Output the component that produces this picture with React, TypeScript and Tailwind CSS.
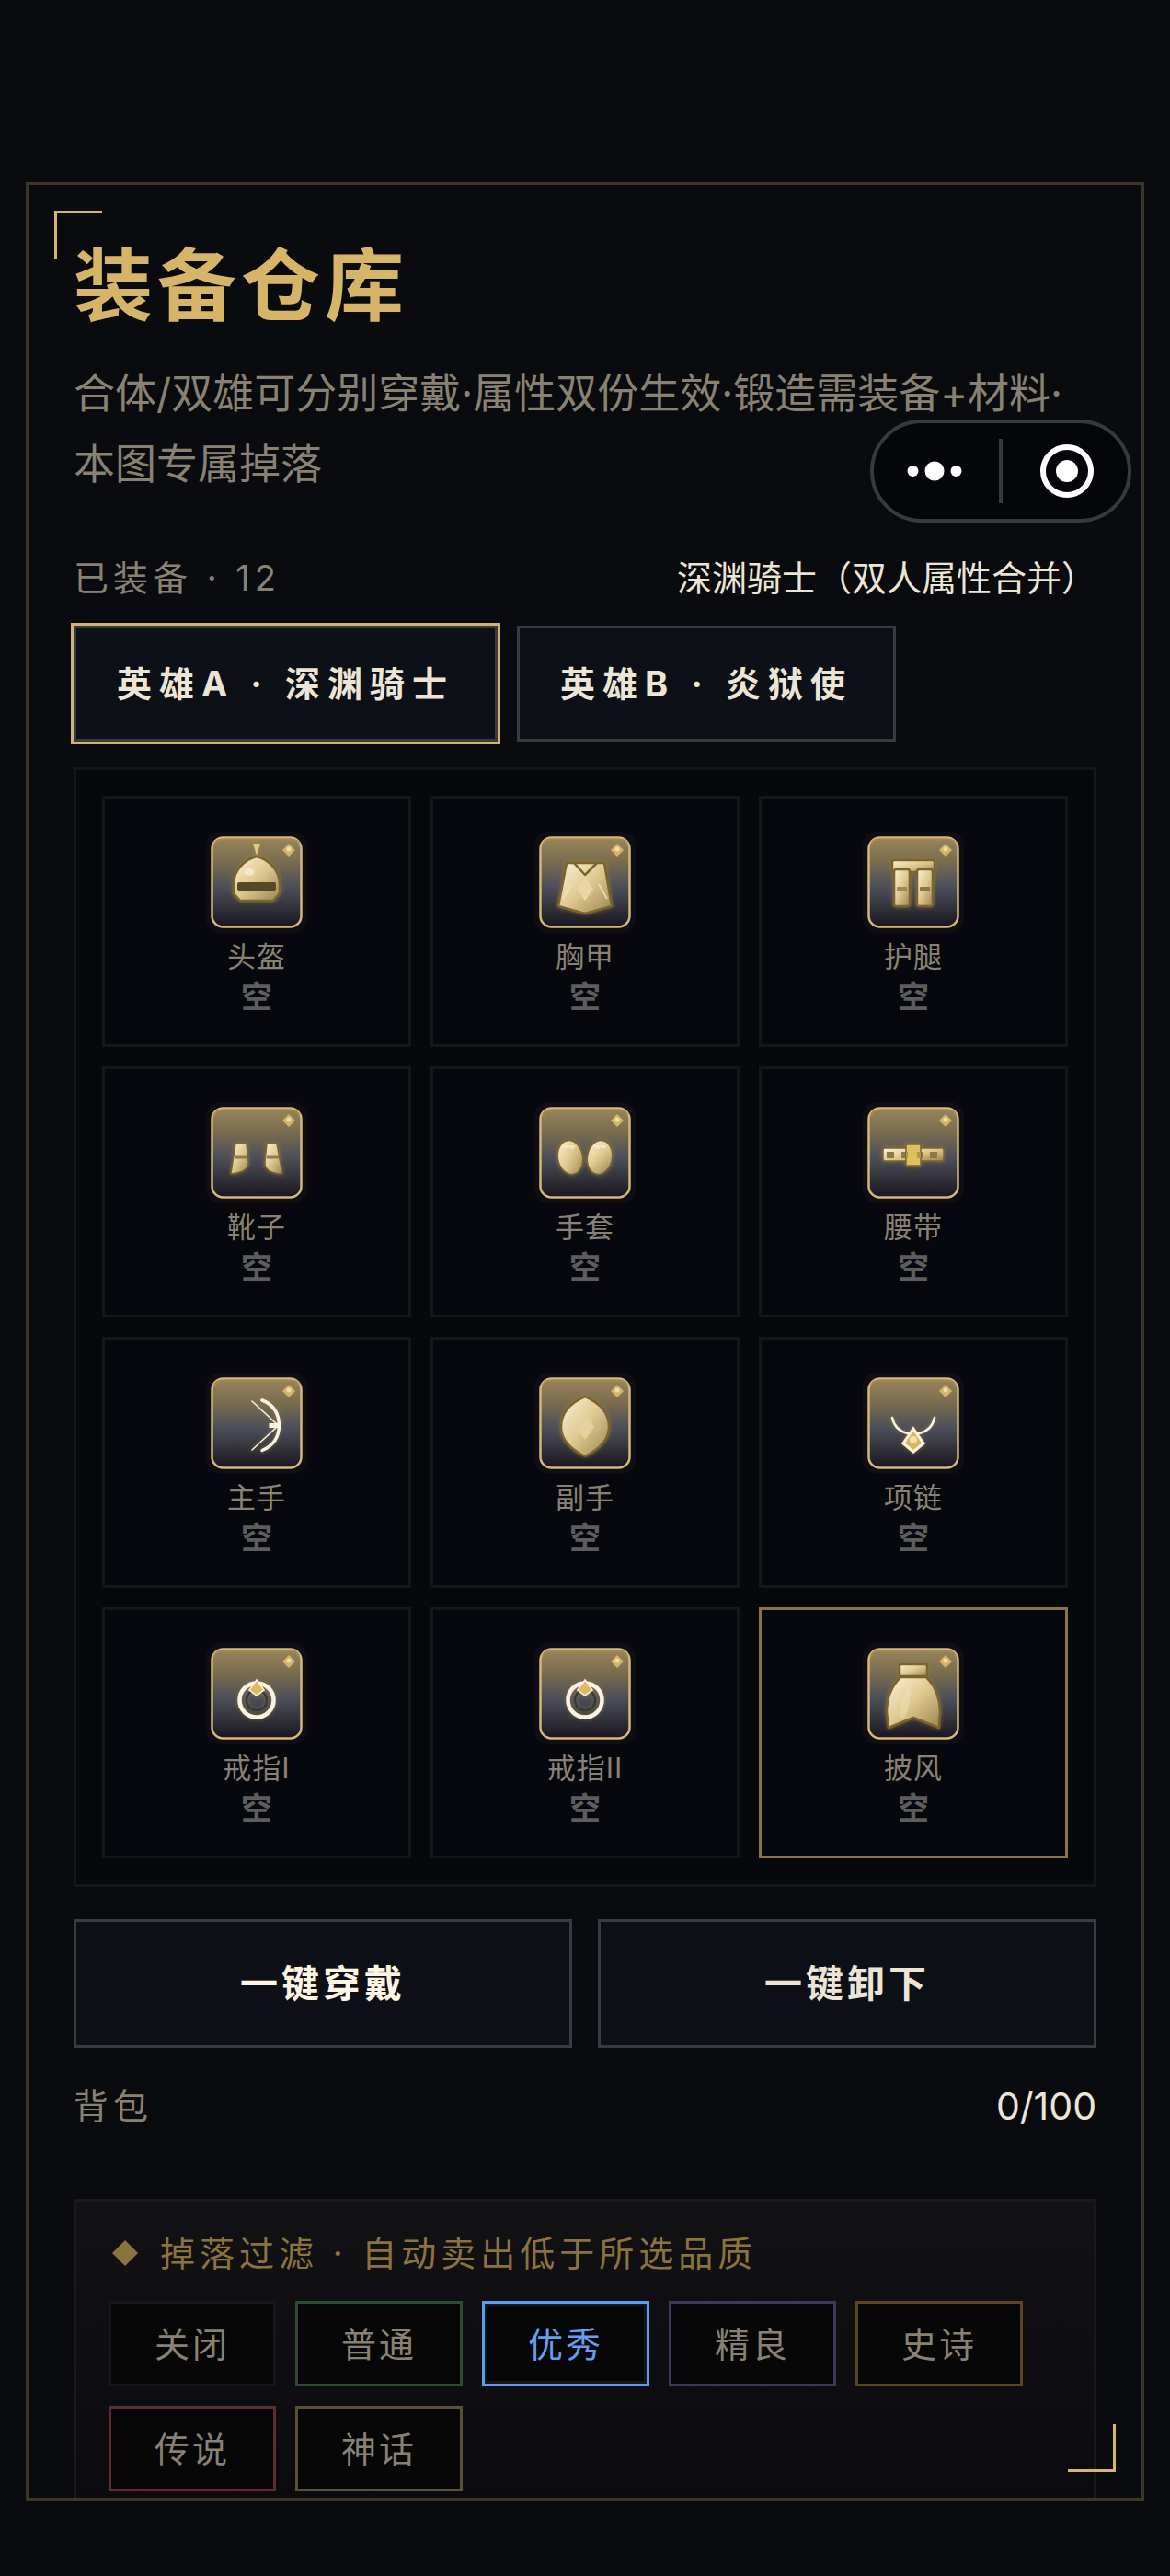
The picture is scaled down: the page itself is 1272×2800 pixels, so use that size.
import { useState, type ReactNode } from 'react';
import clsx from 'clsx';

const OUTLINE = { stroke: '#7a632f', strokeWidth: 2.5, strokeLinejoin: 'round' as const };

const ICONS: Record<string, ReactNode> = {
  helmet: (
    <>
      <path d="M51 13H59L55 26Z" fill="#e3c77d" />
      <path d="M55 27C67 30 80 41 80 57V67L73 75H37L30 67V57C30 41 43 30 55 27Z" fill="url(#gold)" {...OUTLINE} />
      <rect x="34" y="55" width="42" height="9" rx="2" fill="#544829" />
      <ellipse cx="47" cy="44" rx="5.5" ry="4" fill="#f8edd4" opacity=".8" />
    </>
  ),
  chest: (
    <>
      <path d="M35 34H76L84 81L55 89L26 81Z" fill="url(#gold)" {...OUTLINE} />
      <path d="M43 34L55 47L68 34" fill="none" {...OUTLINE} />
      <path d="M55 50L64 62L55 75L46 62Z" fill="#e9d6a4" />
      <path d="M40 57L31 73M70 57L79 73" stroke="#f3e4bd" strokeWidth="2" opacity=".75" />
    </>
  ),
  legs: (
    <>
      <rect x="32" y="31" width="46" height="13" rx="2" fill="url(#gold)" {...OUTLINE} />
      <rect x="34" y="41" width="17" height="40" rx="2.5" fill="url(#gold)" {...OUTLINE} />
      <rect x="59" y="41" width="17" height="40" rx="2.5" fill="url(#gold)" {...OUTLINE} />
      <rect x="37" y="60" width="11" height="5" rx="1" fill="#9d8b60" />
      <rect x="62" y="60" width="11" height="5" rx="1" fill="#8a7747" />
    </>
  ),
  boots: (
    <>
      <path d="M32 45H44L46 65Q47 76 27 78Z" fill="url(#gold)" {...OUTLINE} strokeWidth="1.5" />
      <path d="M66 45H77L83 78Q63 77 64 65Z" fill="url(#gold)" {...OUTLINE} strokeWidth="1.5" />
      <path d="M31 59.5H44.5M66 59.5H79" stroke="#8f7c4e" strokeWidth="4" />
    </>
  ),
  gloves: (
    <>
      <ellipse cx="39" cy="60" rx="13.5" ry="18.5" transform="rotate(-10 39 60)" fill="url(#gold)" {...OUTLINE} strokeWidth="1.5" />
      <ellipse cx="71" cy="60" rx="13.5" ry="18.5" transform="rotate(10 71 60)" fill="url(#gold)" {...OUTLINE} strokeWidth="1.5" />
      <path d="M31 47A3 3 0 0 0 37 48A3 3 0 0 0 44 47M65 47A3 3 0 0 0 72 48A3 3 0 0 0 78 47" fill="#fbf0d5" opacity=".6" />
    </>
  ),
  belt: (
    <>
      <rect x="22" y="50" width="66" height="14" rx="2" fill="url(#gold)" {...OUTLINE} strokeWidth="1.5" />
      <path d="M26 54H34V61H26ZM42 54H49V61H42ZM60 54H66V61H60ZM73 54H81V61H73Z" fill="#8b7949" />
      <rect x="47" y="46" width="16" height="23" rx="1" fill="#dfc061" stroke="#7a632f" strokeWidth="1.5" />
      <path d="M47 54H49V61H47ZM59 54H63V61H59Z" fill="#b1954b" />
    </>
  ),
  bow: (
    <g fill="none" stroke="#fbf3e2" strokeLinecap="round">
      <path d="M61 30Q79 37 79.5 57.5Q79 77 61 84.5" strokeWidth="3.5" />
      <path d="M50 31L77 56M77 59L50 84" strokeWidth="1.5" />
      <rect x="69" y="55.5" width="12" height="4" fill="#fbf3e2" strokeWidth="1" />
    </g>
  ),
  shield: (
    <>
      <path d="M55 26Q81 37 81 59Q81 78 55 91Q29 78 29 59Q29 37 55 26Z" fill="url(#gold)" {...OUTLINE} />
      <path d="M55 45L65 59L55 73L45 59Z" fill="#e4d19f" />
    </>
  ),
  necklace: (
    <>
      <path d="M32 49Q35 63 49 66M78 49Q75 63 61 66" fill="none" stroke="#fbf3e2" strokeWidth="2.5" strokeLinecap="round" />
      <path d="M55 61L66 77L55 86L44 77Z" fill="#d8b65f" stroke="#fbf3e2" strokeWidth="3" />
      <circle cx="55" cy="73" r="4" fill="#f2dfac" />
    </>
  ),
  ring: (
    <>
      <circle cx="55" cy="62" r="18.5" fill="none" stroke="#fbf3e2" strokeWidth="4.5" />
      <circle cx="55" cy="62" r="11" fill="none" stroke="#36373b" strokeWidth="2.5" />
      <path d="M55 40L63 51L55 57L47 51Z" fill="#dcb964" stroke="#fbf3e2" strokeWidth="1.5" />
    </>
  ),
  cape: (
    <>
      <path d="M41 37H69Q84 52 84 75L83 92L55 81L28 92L26 75Q26 52 41 37Z" fill="url(#gold)" {...OUTLINE} />
      <rect x="40" y="23" width="30" height="13" rx="2" fill="url(#gold)" {...OUTLINE} />
      <path d="M51 46Q38 62 42 83Q53 76 51 46Z" fill="#f0e0b5" opacity=".5" />
    </>
  ),
};

const SLOTS = [
  { name: '头盔', icon: 'helmet' },
  { name: '胸甲', icon: 'chest' },
  { name: '护腿', icon: 'legs' },
  { name: '靴子', icon: 'boots' },
  { name: '手套', icon: 'gloves' },
  { name: '腰带', icon: 'belt' },
  { name: '主手', icon: 'bow' },
  { name: '副手', icon: 'shield' },
  { name: '项链', icon: 'necklace' },
  { name: '戒指I', icon: 'ring' },
  { name: '戒指II', icon: 'ring' },
  { name: '披风', icon: 'cape' },
];

const HEROES = ['英雄A · 深渊骑士', '英雄B · 炎狱使'];

const QUALITIES = [
  { name: '关闭', border: 'border-[#17171a]' },
  { name: '普通', border: 'border-[#2d4a33]' },
  { name: '优秀', border: 'border-[#29466e]' },
  { name: '精良', border: 'border-[#42345a]' },
  { name: '史诗', border: 'border-[#5b4326]' },
  { name: '传说', border: 'border-[#5b2d30]' },
  { name: '神话', border: 'border-[#59503a]' },
];

function IconDefs() {
  return (
    <svg className="absolute size-0" aria-hidden="true">
      <defs>
        <linearGradient id="gold" x1="0" y1="0" x2="1" y2="1">
          <stop offset="0" stopColor="#fdf2d8" />
          <stop offset=".5" stopColor="#dfc88f" />
          <stop offset="1" stopColor="#9a8450" />
        </linearGradient>
        <linearGradient id="tile" x1="0" y1="0" x2="0" y2="1">
          <stop offset="0" stopColor="#98855b" />
          <stop offset=".28" stopColor="#786b4e" />
          <stop offset=".57" stopColor="#4a4c59" />
          <stop offset=".75" stopColor="#36373d" />
          <stop offset="1" stopColor="#191521" />
        </linearGradient>
        <filter id="glow" x="-30%" y="-30%" width="160%" height="160%">
          <feDropShadow dx="0" dy="0" stdDeviation="2" floodColor="#a58538" floodOpacity=".6" />
        </filter>
      </defs>
    </svg>
  );
}

function SlotIcon({ icon }: { icon: string }) {
  return (
    <svg viewBox="0 0 110 110" className="size-[110px]" aria-hidden="true">
      <rect width="110" height="110" rx="15" fill="#0f0e15" />
      <rect x="6.5" y="6.5" width="97" height="97" rx="12" fill="url(#tile)" stroke="#d3b878" strokeWidth="2.5" />
      <path d="M9 15Q10 8.500 18 8.500H92Q100 8.500 101 15" fill="none" stroke="#a48a50" strokeWidth="2" />
      <path d="M90 13L97 20L90 27L83 20Z" fill="#d3b469" />
      <circle cx="90" cy="19" r="2.5" fill="#efdca6" />
      <g filter="url(#glow)">{ICONS[icon]}</g>
    </svg>
  );
}

function Capsule() {
  return (
    <div className="absolute top-[456px] right-[42px] flex h-28 w-[284px] items-center rounded-full border-4 border-[#38393d] bg-[#050609]">
      <button aria-label="更多" className="flex flex-1 justify-center pr-1">
        <svg viewBox="0 0 60 24" className="h-6 w-[60px]" fill="#fff">
          <circle cx="6.5" cy="12" r="6" />
          <circle cx="30" cy="12" r="10.5" />
          <circle cx="53.5" cy="12" r="6" />
        </svg>
      </button>
      <span className="h-[70px] w-1 bg-[#38393d]" />
      <button aria-label="关闭" className="flex flex-1 justify-center pl-1">
        <svg viewBox="0 0 58 58" className="size-[58px]">
          <circle cx="29" cy="29" r="26" fill="none" stroke="#fff" strokeWidth="6" />
          <circle cx="29" cy="29" r="12" fill="#fff" />
        </svg>
      </button>
    </div>
  );
}

export default function App() {
  const [hero, setHero] = useState(0);
  const [slot, setSlot] = useState(11);
  const [quality, setQuality] = useState('优秀');

  return (
    <div className="relative flex h-screen flex-col bg-[#0a0b0e] px-7 pt-[198px] pb-[82px] font-[Inter,'Noto_Sans_CJK_SC',sans-serif] text-[38px] leading-[56px] text-[#ece5d6]">
      <IconDefs />
      <main className="relative min-h-0 flex-1 overflow-hidden border-[3px] border-[#3d3526] px-[49px] pt-14">
        <span className="absolute top-7 left-7 size-[52px] border-t-[3px] border-l-[3px] border-[#d6b76a]" />
        <span className="absolute right-7 bottom-7 z-10 size-[52px] border-r-[3px] border-b-[3px] border-[#d6b76a]" />

        <h1 className="text-[86px] leading-[108px] font-bold tracking-[5px] text-[#d6b468]">装备仓库</h1>
        <p className="mt-6 text-[45px] leading-[77px] text-[#898274]">合体/双雄可分别穿戴·属性双份生效·锻造需装备+材料·本图专属掉落</p>

        <div className="mt-[57px] flex justify-between">
          <span className="tracking-[5px] text-[#898274]">已装备 · 12</span>
          <span>深渊骑士（双人属性合并）</span>
        </div>

        <div className="mt-6 flex gap-[21px]">
          {HEROES.map((name, i) => (
            <button
              key={name}
              onClick={() => setHero(i)}
              className={clsx('h-[126px] border-[3px] border-[#393b40] bg-[#0d1017] px-11 font-bold tracking-[8px]', hero === i && 'ring-[3px] ring-[#d0b272]')}
            >
              {name}
            </button>
          ))}
        </div>

        <section className="mt-7 grid grid-cols-3 gap-[21px] border-[3px] border-[#15161a] bg-[#07080c] p-7">
          {SLOTS.map((s, i) => (
            <button
              key={s.name}
              onClick={() => setSlot(i)}
              className={clsx('flex h-[273px] flex-col items-center border-[3px] bg-[#07080d] pt-9', slot === i ? 'border-[#8b7344]' : 'border-[#15161a]')}
            >
              <SlotIcon icon={s.icon} />
              <span className="mt-1 text-[31px] leading-[44px] tracking-[1px] text-[#898274]">{s.name}</span>
              <span className="text-[34px] leading-[44px] font-bold text-[#5e5d5d]">空</span>
            </button>
          ))}
        </section>

        <div className="mt-[35px] grid grid-cols-2 gap-7">
          <button className="h-[140px] border-[3px] border-[#393b40] bg-[#0d1017] text-[41px] font-bold tracking-[4px] text-[#fff5e2]">一键穿戴</button>
          <button className="h-[140px] border-[3px] border-[#393b40] bg-[#0d1017] text-[41px] font-bold tracking-[4px]">一键卸下</button>
        </div>

        <div className="mt-[35px] flex justify-between">
          <span className="tracking-[5px] text-[#898274]">背包</span>
          <span className="text-[41px]">0/100</span>
        </div>

        <section className="mt-[73px] border-[3px] border-[#19191d] bg-linear-to-b from-[#121114] to-[#0b0a0e] px-[35px] pt-7 pb-[35px]">
          <h2 className="flex items-center gap-6 pl-1 tracking-[5px] text-[#8b7340]">
            <svg viewBox="0 0 28 28" className="size-7" aria-hidden="true">
              <path d="M14 0L28 14L14 28L0 14Z" fill="currentColor" />
            </svg>
            掉落过滤 · 自动卖出低于所选品质
          </h2>
          <div className="mt-6 flex flex-wrap gap-[21px]">
            {QUALITIES.map((q) => (
              <button
                key={q.name}
                onClick={() => setQuality(q.name)}
                className={clsx('h-[93px] w-[182px] border-[3px] bg-[#070708] tracking-[3px]', quality === q.name ? 'border-[#5f9bf2] text-[#649ff5] inset-ring-[3px] inset-ring-[#15181d]' : [q.border, 'text-[#898274]'])}
              >
                {q.name}
              </button>
            ))}
          </div>
        </section>
      </main>
      <Capsule />
    </div>
  );
}
